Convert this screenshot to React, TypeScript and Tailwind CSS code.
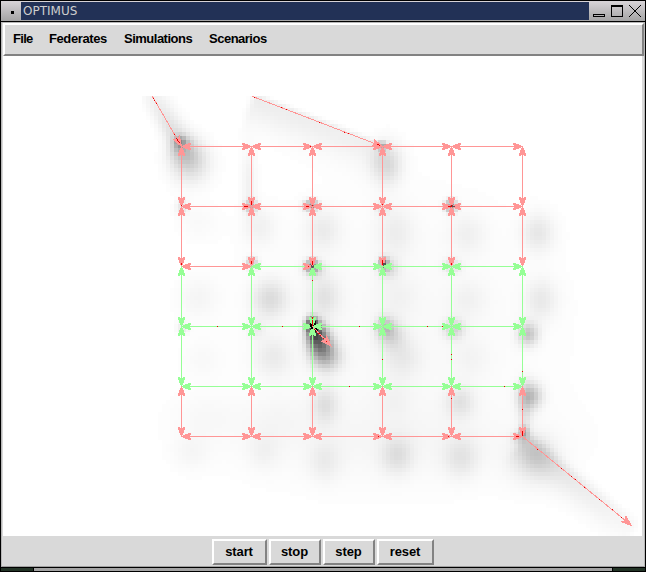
import React from "react";

const XS = [181, 251, 312, 382, 451, 522];
const YS = [146, 206, 266, 326, 386, 436];
const RED = "#ff9696";
const GREEN = "#96ff96";

// Density sources: [centre x, centre y, sigma x, sigma y, amplitude]
const SOURCES: number[][] = [
  [180, 142, 4, 4, 0.3], [184, 152, 9, 9, 0.16], [190, 162, 13, 14, 0.16],
  [382, 146, 3, 3, 0.3], [387, 164, 10, 14, 0.15],
  [251, 206, 4, 4, 0.28], [249, 182, 5, 24, 0.05], [312, 205, 4, 3, 0.34], [310, 206, 5, 4, 0.15],
  [451, 206, 4, 4, 0.42], [382, 208, 5, 5, 0.08], [182, 207, 4, 5, 0.1],
  [252, 263, 4, 4, 0.22], [312, 266, 4, 4, 0.5], [314, 269, 7, 6, 0.15], [384, 264, 3, 4, 0.5], [388, 268, 7, 7, 0.14], [452, 266, 6, 5, 0.12],
  [260, 227, 11, 13, 0.05], [323, 230, 12, 14, 0.07], [395, 232, 13, 17, 0.06], [467, 234, 13, 14, 0.05], [538, 233, 11, 13, 0.09],
  [198, 222, 14, 12, 0.02], [198, 298, 13, 14, 0.035], [270, 299, 12, 13, 0.13], [324, 297, 11, 15, 0.1], [397, 296, 14, 15, 0.035], [468, 300, 13, 13, 0.04], [541, 300, 11, 14, 0.08],
  [312, 325, 4, 5, 0.85], [316, 334, 6, 8, 0.65], [321, 345, 8, 10, 0.46], [327, 357, 10, 10, 0.22],
  [385, 327, 6, 7, 0.2], [391, 335, 9, 10, 0.14], [402, 357, 13, 14, 0.07],
  [454, 329, 7, 7, 0.16], [528, 334, 7, 8, 0.22], [183, 328, 4, 4, 0.08],
  [256, 329, 6, 7, 0.06], [273, 357, 13, 14, 0.07], [202, 360, 12, 13, 0.02], [470, 358, 13, 14, 0.03],
  [530, 396, 8, 9, 0.25], [524, 432, 3, 4, 0.3], [519, 438, 5, 4, 0.12], [525, 409, 5, 17, 0.1],
  [325, 405, 9, 13, 0.11], [460, 402, 10, 11, 0.1], [394, 400, 12, 14, 0.03],
  [191, 452, 12, 12, 0.03], [264, 451, 11, 13, 0.04], [325, 461, 11, 14, 0.06], [397, 455, 11, 13, 0.11], [461, 457, 12, 14, 0.09], [536, 455, 12, 12, 0.09], [533, 461, 18, 18, 0.06],
  [205, 418, 22, 16, 0.02], [275, 419, 22, 16, 0.02],
  [395, 330, 110, 95, 0.022], [385, 440, 110, 28, 0.025],
];

// Trails left behind along the slanted roads: x1, y1, x2, y2, sigma right of travel, sigma left of travel, start and end amplitude
const TRAILS: number[][] = [
  [152, 96, 181, 146, 7, 9, 0.05, 0.15],
  [258, 98, 382, 146, 18, 2.5, 0.07, 0.055],
  [528, 441, 631, 525, 14, 5, 0.12, 0.03],
];

const sample = (x: number, y: number): number => {
  let clear = 1;
  for (const [cx, cy, sx, sy, a] of SOURCES) {
    const u = (x - cx) / sx;
    const v = (y - cy) / sy;
    clear *= 1 - a * Math.exp(-(u * u + v * v) / 2);
  }
  for (const [x1, y1, x2, y2, right, left, a, b] of TRAILS) {
    const dx = x2 - x1;
    const dy = y2 - y1;
    const raw = ((x - x1) * dx + (y - y1) * dy) / (dx * dx + dy * dy);
    const t = Math.max(0, Math.min(1, raw));
    const side = (x - x1) * dy - (y - y1) * dx;
    const across = Math.abs(side) / Math.hypot(dx, dy);
    const along = (raw - t) * Math.hypot(dx, dy);
    const spread = side > 0 ? left : right;
    clear *= 1 - (a + (b - a) * t) * Math.exp(-(across * across) / (2 * spread * spread) - (along * along) / 36);
  }
  return 1 - clear;
};

const CELLS: { x: number; y: number; c: string }[] = [];
for (let y = 96; y < 536; y += 4) {
  for (let x = 142; x < 642; x += 4) {
    const g = Math.round(255 * (1 - sample(x + 2, y + 2)));
    if (g < 254) CELLS.push({ x, y, c: `rgb(${g},${g},${g})` });
  }
}

const HEAD = "M2-1h7v1h-7zM2 1h7v1h-7zM4-2h6v1h-6zM4 2h6v1h-6zM7-3h3v1h-3zM7 3h3v1h-3zM0 0h8v1h-8z";

function Head({ x, y, dir, c }: { x: number; y: number; dir: "l" | "r" | "u" | "d"; c: string }) {
  const m = {
    l: `matrix(1 0 0 1 ${x} ${y})`,
    r: `matrix(-1 0 0 1 ${x + 1} ${y})`,
    u: `matrix(0 1 1 0 ${x} ${y})`,
    d: `matrix(0 -1 1 0 ${x} ${y + 1})`,
  }[dir];
  return <path d={HEAD} transform={m} fill={c} />;
}

function Slant({ p }: { p: number[] }) {
  const [x1, y1, x2, y2] = p;
  const angle = (Math.atan2(y2 - y1, x2 - x1) * 180) / Math.PI;
  return (
    <g>
      <line x1={x1} y1={y1} x2={x2} y2={y2} stroke={RED} />
      <path d="M0 0L-10-3.5L-8 0L-10 3.5z" fill={RED} stroke={RED} strokeWidth="1" transform={`translate(${x2} ${y2}) rotate(${angle})`} />
    </g>
  );
}

const DOTS: number[][] = [
  [153, 98, 1, 1], [154, 100, 1, 1], [156, 103, 1, 1], [174, 134, 1, 1], [176, 138, 1, 1], [177, 139, 1, 2], [178, 141, 1, 1], [179, 142, 1, 1],
  [254, 97, 1, 1], [281, 107, 1, 1], [286, 109, 1, 1], [319, 122, 1, 1], [344, 132, 1, 1], [348, 133, 1, 1], [377, 144, 2, 1], [379, 145, 1, 1], [310, 146, 1, 1],
  [181, 205, 1, 1], [251, 201, 1, 4], [244, 206, 4, 1], [306, 206, 3, 1], [312, 205, 1, 1], [382, 204, 1, 1], [448, 206, 4, 1], [451, 205, 1, 1],
  [181, 263, 1, 2], [251, 261, 1, 3], [312, 261, 1, 4], [308, 266, 1, 1], [382, 260, 1, 5], [451, 263, 1, 2],
  [312, 280, 1, 1], [312, 317, 1, 2], [312, 320, 1, 6], [217, 326, 1, 1], [282, 326, 1, 1], [359, 326, 1, 1], [427, 326, 1, 1], [442, 326, 1, 1],
  [314, 329, 1, 1], [316, 331, 1, 1], [318, 333, 2, 1], [320, 335, 1, 1], [323, 338, 1, 1], [326, 341, 1, 1],
  [382, 359, 1, 1], [451, 354, 1, 1], [451, 359, 1, 1], [522, 371, 1, 1], [349, 386, 1, 1], [504, 386, 1, 1],
  [451, 398, 1, 1], [378, 436, 1, 1], [448, 436, 1, 1], [522, 409, 1, 1], [522, 431, 1, 5], [516, 436, 3, 1],
  [537, 449, 1, 1], [561, 468, 1, 1], [571, 476, 1, 1], [575, 479, 1, 1], [584, 487, 1, 1], [599, 499, 1, 1], [612, 509, 1, 1], [621, 517, 1, 1],
];

function Network() {
  const edges: React.ReactNode[] = [];
  YS.forEach((y, r) =>
    XS.slice(0, -1).forEach((x, i) => {
      const c = r === 3 || r === 4 || (r === 2 && i > 0) ? GREEN : RED;
      const x2 = XS[i + 1];
      edges.push(
        <g key={`h${r}-${i}`}>
          <rect x={x} y={y} width={x2 - x + 1} height={1} fill={c} />
          <Head x={x} y={y} dir="l" c={c} />
          <Head x={x2} y={y} dir="r" c={r === 2 && i === 1 ? RED : c} />
        </g>
      );
    })
  );
  XS.forEach((x, i) =>
    YS.slice(0, -1).forEach((y, r) => {
      const c = r === 2 || r === 3 ? GREEN : RED;
      const y2 = YS[r + 1];
      edges.push(
        <g key={`v${r}-${i}`}>
          <rect x={x} y={y} width={1} height={y2 - y + 1} fill={c} />
          <Head x={x} y={y} dir="u" c={c} />
          <Head x={x} y={y2} dir="d" c={c} />
        </g>
      );
    })
  );
  return (
    <svg className="block h-[480px] w-[639px] shrink-0 bg-white" viewBox="3 56 639 480" shapeRendering="crispEdges">
      {CELLS.map((k, i) => (
        <rect key={i} x={k.x} y={k.y} width={4} height={4} fill={k.c} />
      ))}
      <path d="M311 318h3v3h2v4h-2v4h4v3h-5v-4h-5v-2h2v-3h1z" fill="#151515" />
      {edges}
      <path d="M310 324h2v1h1v4h-2v-2h-1zM314 324h1v1h-1zM315 328h2v2h-2z" fill="#000" />
      <path d="M311 265h1v1h2v1h-1v1h-1v-1h-1zM451 205h2v1h2v1h-4zM383 263h3v2h-2v1h-1z" fill="#555" />
      <Slant p={[152.5, 96.5, 181.5, 146.5]} />
      <Slant p={[252.5, 96.5, 382.5, 146.5]} />
      <Slant p={[312.5, 326.5, 331, 346]} />
      <Slant p={[522.5, 436.5, 631.5, 525.5]} />
      {DOTS.map(([x, y, w, h], i) => (
        <rect key={i} x={x} y={y} width={w} height={h} fill="#e80000" />
      ))}
    </svg>
  );
}

const FONT = "font-['Liberation_Sans',Arial,sans-serif] text-[13px] font-bold leading-[14px] text-black";

export default function App() {
  return (
    <div className="flex h-[572px] w-[646px] flex-col overflow-hidden border border-black bg-[#d9d9d9]">
      <div className="flex h-[20px] shrink-0 bg-linear-to-b from-[#d8d4d8] to-[#a4a4a4]">
        <div className="flex w-[20px] items-center justify-end pr-[7px]">
          <div className="mt-[3px] size-[3px] bg-black" />
        </div>
        <div className="mt-px flex h-[18px] w-[568px] items-center bg-[#223156] pl-[2px] font-['DejaVu_Sans',sans-serif] text-[12px] leading-[18px] text-[#cecece]">
          OPTIMUS
        </div>
        <svg className="h-[20px] w-[56px]" viewBox="589 1 56 20" fill="none" stroke="#000" shapeRendering="crispEdges">
          <path d="M593.5 14.5h11v2h-11zM611.5 5.5h11v11h-11zM611 6.5h12" />
          <path d="M629 5l12 12M641 5l-12 12" />
        </svg>
      </div>
      <div className="h-px shrink-0 bg-black" />
      <div className="flex h-[545px] shrink-0 flex-col border-x border-b border-[#b8b8b8] border-b-[#a0a0a0]">
        <div className="h-px shrink-0 bg-[#b8b8b8]" />
        <div className="ml-px flex h-[33px] shrink-0 items-center gap-[17px] border-2 border-t-white border-r-[#828282] border-b-[#828282] border-l-white pb-[2px] pl-[8px]">
          <span className={`${FONT} w-[19px] whitespace-nowrap tracking-[-0.7px]`}>File</span>
          <span className={`${FONT} w-[58px] whitespace-nowrap tracking-[-0.4px]`}>Federates</span>
          <span className={`${FONT} w-[68px] whitespace-nowrap tracking-[-0.5px]`}>Simulations</span>
          <span className={`${FONT} w-[58px] whitespace-nowrap tracking-[-0.5px]`}>Scenarios</span>
        </div>
        <div className="ml-px flex h-[480px] shrink-0">
          <Network />
        </div>
        <div className="flex h-[30px] shrink-0 items-center gap-[2px] pt-[2px] pl-[210px]">
          {[
            ["start", "w-[55px]"],
            ["stop", "w-[52px]"],
            ["step", "w-[52px]"],
            ["reset", "w-[57px]"],
          ].map(([label, width]) => (
            <button key={label} className={`${FONT} ${width} h-[26px] border-2 border-t-white border-r-[#828282] border-b-[#828282] border-l-white bg-[#d9d9d9] pr-px tracking-[-0.1px]`}>
              {label}
            </button>
          ))}
        </div>
      </div>
      <div className="h-px shrink-0 bg-black" />
      <div className="flex h-[3px] shrink-0 gap-px bg-black">
        <div className="w-[32px] bg-[#223326]" />
        <div className="flex-1 bg-[#a3a3a3]" />
        <div className="w-[32px] bg-[#223326]" />
      </div>
    </div>
  );
}
